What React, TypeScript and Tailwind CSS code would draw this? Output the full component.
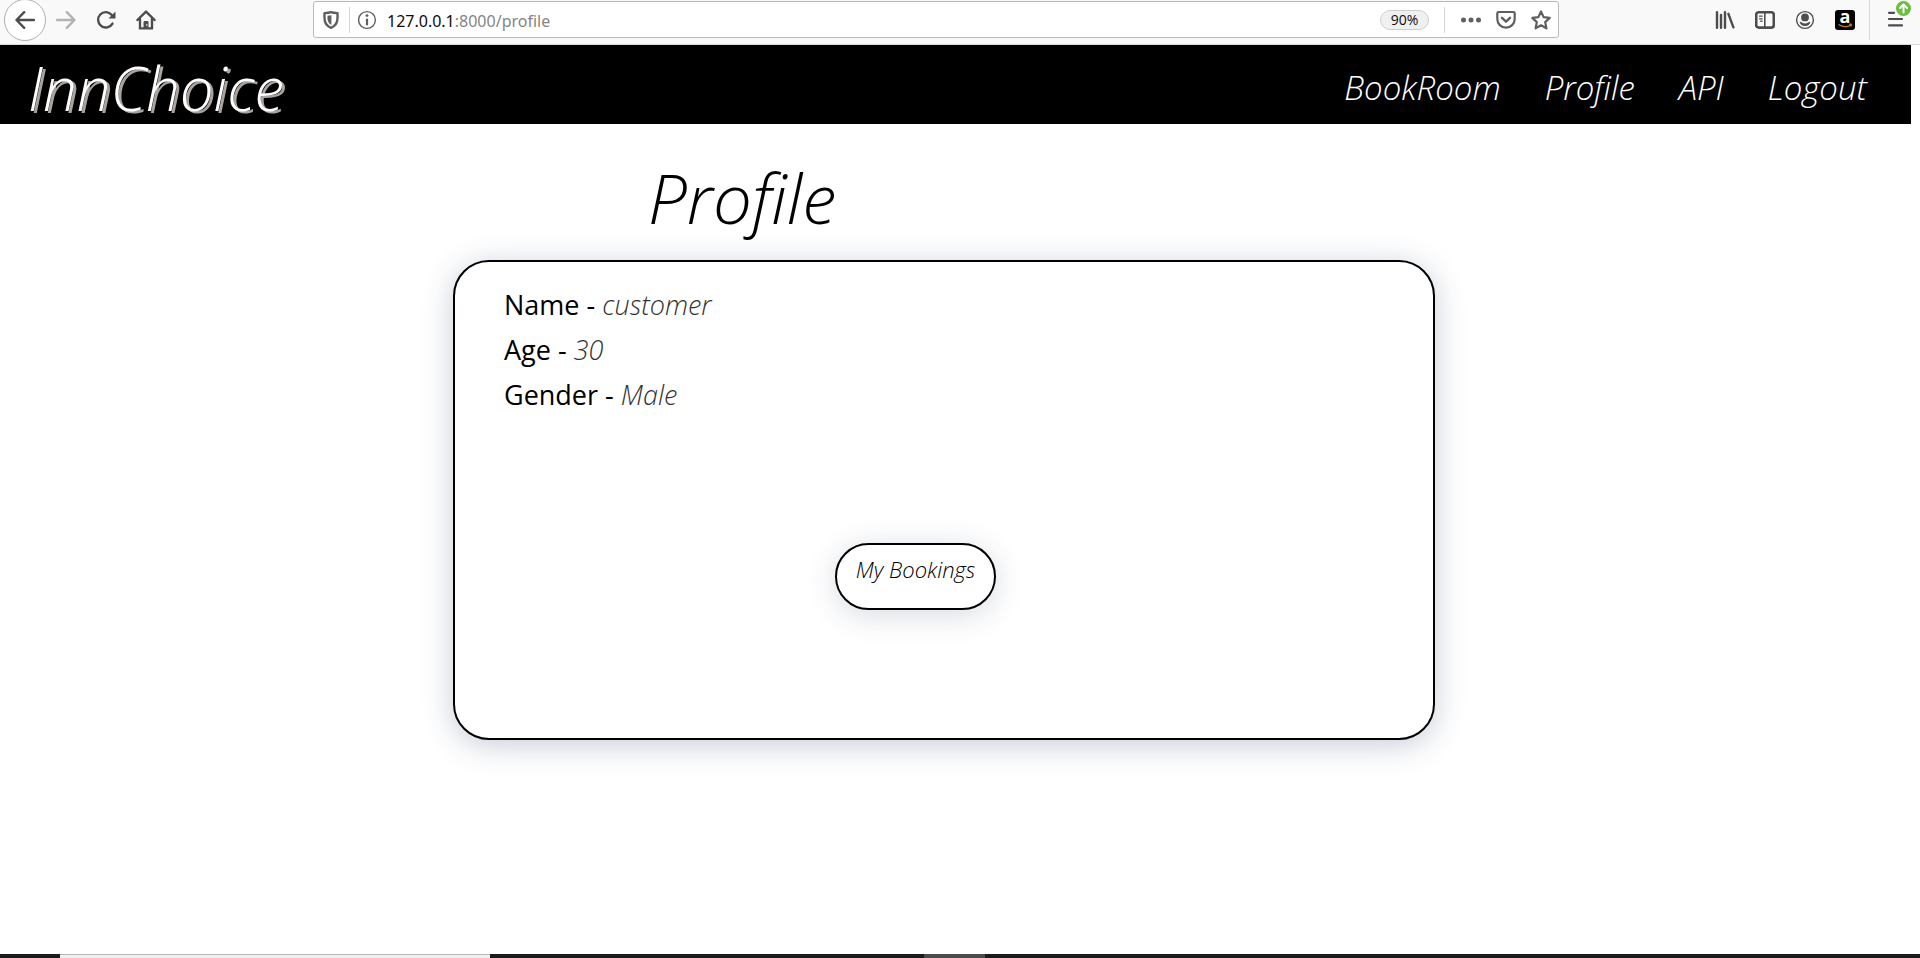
import type { ReactNode } from "react";

function Icon({ children }: { children: ReactNode }) {
  return (
    <svg
      viewBox="0 0 20 20"
      className="size-5 shrink-0"
      fill="none"
      stroke="currentColor"
      strokeWidth="2.4"
      strokeLinecap="round"
      strokeLinejoin="round"
      aria-hidden="true"
    >
      {children}
    </svg>
  );
}

function ToolButton({ label, children }: { label: string; children: ReactNode }) {
  return (
    <button type="button" aria-label={label} className="flex size-5 shrink-0 items-center justify-center">
      {children}
    </button>
  );
}

function BrowserToolbar() {
  return (
    <div className="flex h-[45px] shrink-0 items-start overflow-hidden border-b border-[#d9d9d9] bg-[#f9f9fa] text-[#4d4d4d]">
      <div className="-mt-px flex w-[313px] shrink-0 items-center pl-1">
        <button
          type="button"
          aria-label="Back"
          className="flex size-[42px] items-center justify-center rounded-full border border-[#b1b1b1] bg-white"
        >
          <Icon>
            <path d="M19 10H2M9.2 2.2L1.5 10l7.7 7.8" />
          </Icon>
        </button>
        <div className="flex gap-5 pl-2.5">
          <div className="flex text-[#b3b3b3]">
            <ToolButton label="Forward">
              <Icon>
                <path d="M1 10h17M10.8 2.2L18.5 10l-7.7 7.8" />
              </Icon>
            </ToolButton>
          </div>
          <ToolButton label="Reload">
            <Icon>
              <path d="M16.5 13.6A7.7 7.7 0 1 1 15.8 5" />
              <path d="M19.5 1.5v7h-7z" fill="currentColor" stroke="none" />
            </Icon>
          </ToolButton>
          <ToolButton label="Home">
            <Icon>
              <path d="M1.4 10L10 1.6l8.6 8.4M4 9v9.4h12V9" />
              <path d="M8 18v-6.5h4V18z" fill="currentColor" strokeWidth="1" />
              <path d="M10.8 14.5v1" stroke="#f9f9fa" strokeWidth="1" />
            </Icon>
          </ToolButton>
        </div>
      </div>

      <div className="mt-px flex h-[37px] flex-1 items-center rounded-[3px] border border-[#b9b9b9] bg-white text-[#5f5f5f]">
        <div className="flex w-[35px] shrink-0 items-center pl-[7px]">
          <ToolButton label="Tracking protection">
            <Icon>
              <path d="M10 2.2c2.3.9 4.4.9 6.500.9v5c0 4.700-2.600 8.200-6.500 9.700C6.100 16.300 3.500 12.800 3.500 8.100v-5C5.600 3.100 7.700 3.100 10 2.200z" />
              <path d="M10.400 5.200v9.800C7.600 13.600 6.500 11 6.500 8.300V5.700z" fill="currentColor" stroke="none" />
            </Icon>
          </ToolButton>
        </div>
        <div className="h-[26px] w-px shrink-0 bg-[#d7d7db]" />
        <div className="flex w-[36px] shrink-0 justify-center">
          <ToolButton label="Site information">
            <Icon>
              <circle cx="9" cy="10" r="8.400" strokeWidth="1.400" />
              <path d="M9 9.500v5" strokeWidth="2.200" />
              <circle cx="9" cy="5.600" r="1.400" fill="currentColor" stroke="none" />
            </Icon>
          </ToolButton>
        </div>
        <div className="relative flex min-w-0 flex-1 items-center text-[16px] leading-5">
          <div className="pointer-events-none absolute inset-0 flex items-center pt-0.5 pl-px font-['Noto_Sans',sans-serif] whitespace-pre text-[#858585]">
            <span className="text-[#0c0c0d]">127.0.0.1</span>:8000/profile
          </div>
          <input type="text" aria-label="Address" className="w-full bg-transparent outline-none" />
        </div>
        <button
          type="button"
          className="h-5 w-[49px] shrink-0 rounded-full border border-[#cfcfcf] bg-[#f0f0f0] font-['Open_Sans',sans-serif] text-[14px] leading-[18px] text-[#0c0c0d]"
        >
          90%
        </button>
        <div className="mr-4 ml-[15px] h-[26px] w-px shrink-0 bg-[#d7d7db]" />
        <div className="flex gap-[15px] pr-[7px]">
          <ToolButton label="Page actions">
            <Icon>
              <g fill="currentColor" stroke="none">
                <circle cx="2.500" cy="10" r="2.500" />
                <circle cx="10" cy="10" r="2.500" />
                <circle cx="17.500" cy="10" r="2.500" />
              </g>
            </Icon>
          </ToolButton>
          <ToolButton label="Save to Pocket">
            <Icon>
              <path d="M2.600 2h14.800q1.300 0 1.300 1.300V9a8.700 8.700 0 0 1-17.400 0V3.300Q1.300 2 2.600 2z" strokeWidth="2.200" />
              <path d="M6 7.800l4 3.900 4-3.900" />
            </Icon>
          </ToolButton>
          <ToolButton label="Bookmark this page">
            <Icon>
              <path
                d="M10 1.500l2.600 5.600 6.100.8-4.500 4.200 1.200 6.200-5.400-3-5.400 3 1.200-6.200-4.500-4.200 6.100-.8z"
                strokeWidth="2.200"
              />
            </Icon>
          </ToolButton>
        </div>
      </div>

      <div className="flex h-[39px] w-[361px] shrink-0 items-center justify-end">
        <div className="flex gap-5 pr-3.5">
          <ToolButton label="Library">
            <Icon>
              <path d="M2 2.200v15.600M6 5v12.800M10 2.200v15.600M13.400 3.800l5 13.600" strokeWidth="2.400" />
            </Icon>
          </ToolButton>
          <ToolButton label="Sidebars">
            <Icon>
              <rect x="1.200" y="2.200" width="17.600" height="15.400" rx="2.600" strokeWidth="2.600" />
              <path d="M9.800 3v14" strokeWidth="1.600" />
              <path d="M4.500 6.200h2.700M4.500 8.800h2.700M5.500 11.200h1.700" strokeWidth="1.200" />
            </Icon>
          </ToolButton>
          <ToolButton label="Account">
            <Icon>
              <circle cx="10" cy="10" r="8.400" strokeWidth="1.400" />
              <circle cx="10" cy="7.400" r="3.900" fill="currentColor" stroke="none" />
              <path d="M4.600 11.800q1.400 0 2.300.8 3.100 1.700 6.200 0 .9-.8 2.300-.8-.8 4.200-5.400 4.200t-5.400-4.200z" fill="currentColor" stroke="none" />
            </Icon>
          </ToolButton>
          <button
            type="button"
            aria-label="Amazon"
            className="relative flex size-5 items-start justify-center rounded-[3px] bg-black"
          >
            <span className="font-['Open_Sans',sans-serif] text-[18px] leading-[13px] font-bold text-white">a</span>
            <svg viewBox="0 0 20 20" className="absolute inset-0" aria-hidden="true">
              <path d="M3.500 14.500q6.200 4 12 .7M14 14.200l2.400.1-.6 2.200" fill="none" stroke="#c97b18" strokeWidth="1.300" />
            </svg>
          </button>
        </div>
        <div className="h-10 w-px shrink-0 bg-[#d7d7db]" />
        <button type="button" aria-label="Open menu, update available" className="ml-3.5 w-9 shrink-0">
          <svg viewBox="0 0 36 39" className="h-[39px] w-9" fill="none" strokeLinecap="round" aria-hidden="true">
            <path d="M5 12.800h5M5 19h13M5 25.400h13" stroke="#4d4d4d" strokeWidth="2.200" />
            <circle cx="19.500" cy="8.500" r="7.500" fill="#6cbf3f" />
            <path d="M19.500 12.500v-7M16 8l3.500-3.500L23 8" stroke="#fff" strokeWidth="2" strokeLinejoin="round" />
          </svg>
        </button>
      </div>
    </div>
  );
}

const links = ["BookRoom", "Profile", "API", "Logout"];

function SiteHeader() {
  return (
    <header className="mr-[9px] flex h-[79px] shrink-0 items-center justify-between bg-black pr-11 pl-7 font-['Open_Sans',sans-serif] font-light text-white italic">
      <a href="#home" className="pt-1.5 text-[60px] leading-[68px] [text-shadow:3px_2px_0_#a8a39f]">
        InnChoice
      </a>
      <nav className="flex gap-11 pt-1.5 text-[33px] leading-10">
        {links.map((link) => (
          <a key={link} href={`#${link.toLowerCase()}`}>
            {link}
          </a>
        ))}
      </nav>
    </header>
  );
}

const details = [
  { term: "Name", value: "customer" },
  { term: "Age", value: "30" },
  { term: "Gender", value: "Male" },
];

function ProfileCard() {
  return (
    <section className="mr-[485px] ml-[453px] flex h-[480px] flex-col rounded-[36px] border-2 border-black bg-white px-[49px] pt-5 font-['Open_Sans',sans-serif] shadow-[0_5px_30px_rgba(38,57,96,0.26)]">
      <dl className="text-[27px] leading-[45px]">
        {details.map(({ term, value }) => (
          <div key={term} className="flex gap-[7px]">
            <dt>{term} -</dt>
            <dd className="font-light text-[#333333] italic">{value}</dd>
          </div>
        ))}
      </dl>
      <button
        type="button"
        className="mt-[126px] ml-[331px] flex h-[67px] w-[161px] justify-center rounded-[36px] border-2 border-black bg-white pt-2.5 text-[22px] leading-7 font-light whitespace-nowrap italic shadow-[0_5px_30px_rgba(38,57,96,0.18)]"
      >
        My Bookings
      </button>
    </section>
  );
}

function Taskbar() {
  return (
    <footer className="flex h-1 shrink-0 bg-[#1a1c1c]">
      <div className="ml-[60px] w-[430px] border-t border-[#b8b8b8] bg-[#f0f0f0]" />
      <div className="ml-[434px] w-[61px] bg-[#4a4c4c]" />
    </footer>
  );
}

export default function App() {
  return (
    <div className="flex min-h-screen flex-col bg-white text-black">
      <BrowserToolbar />
      <SiteHeader />
      <main className="flex-1">
        <h1 className="ml-[648px] pt-[31px] pb-[21px] font-['Open_Sans',sans-serif] text-[69px] leading-[84px] font-light italic">
          Profile
        </h1>
        <ProfileCard />
      </main>
      <Taskbar />
    </div>
  );
}
